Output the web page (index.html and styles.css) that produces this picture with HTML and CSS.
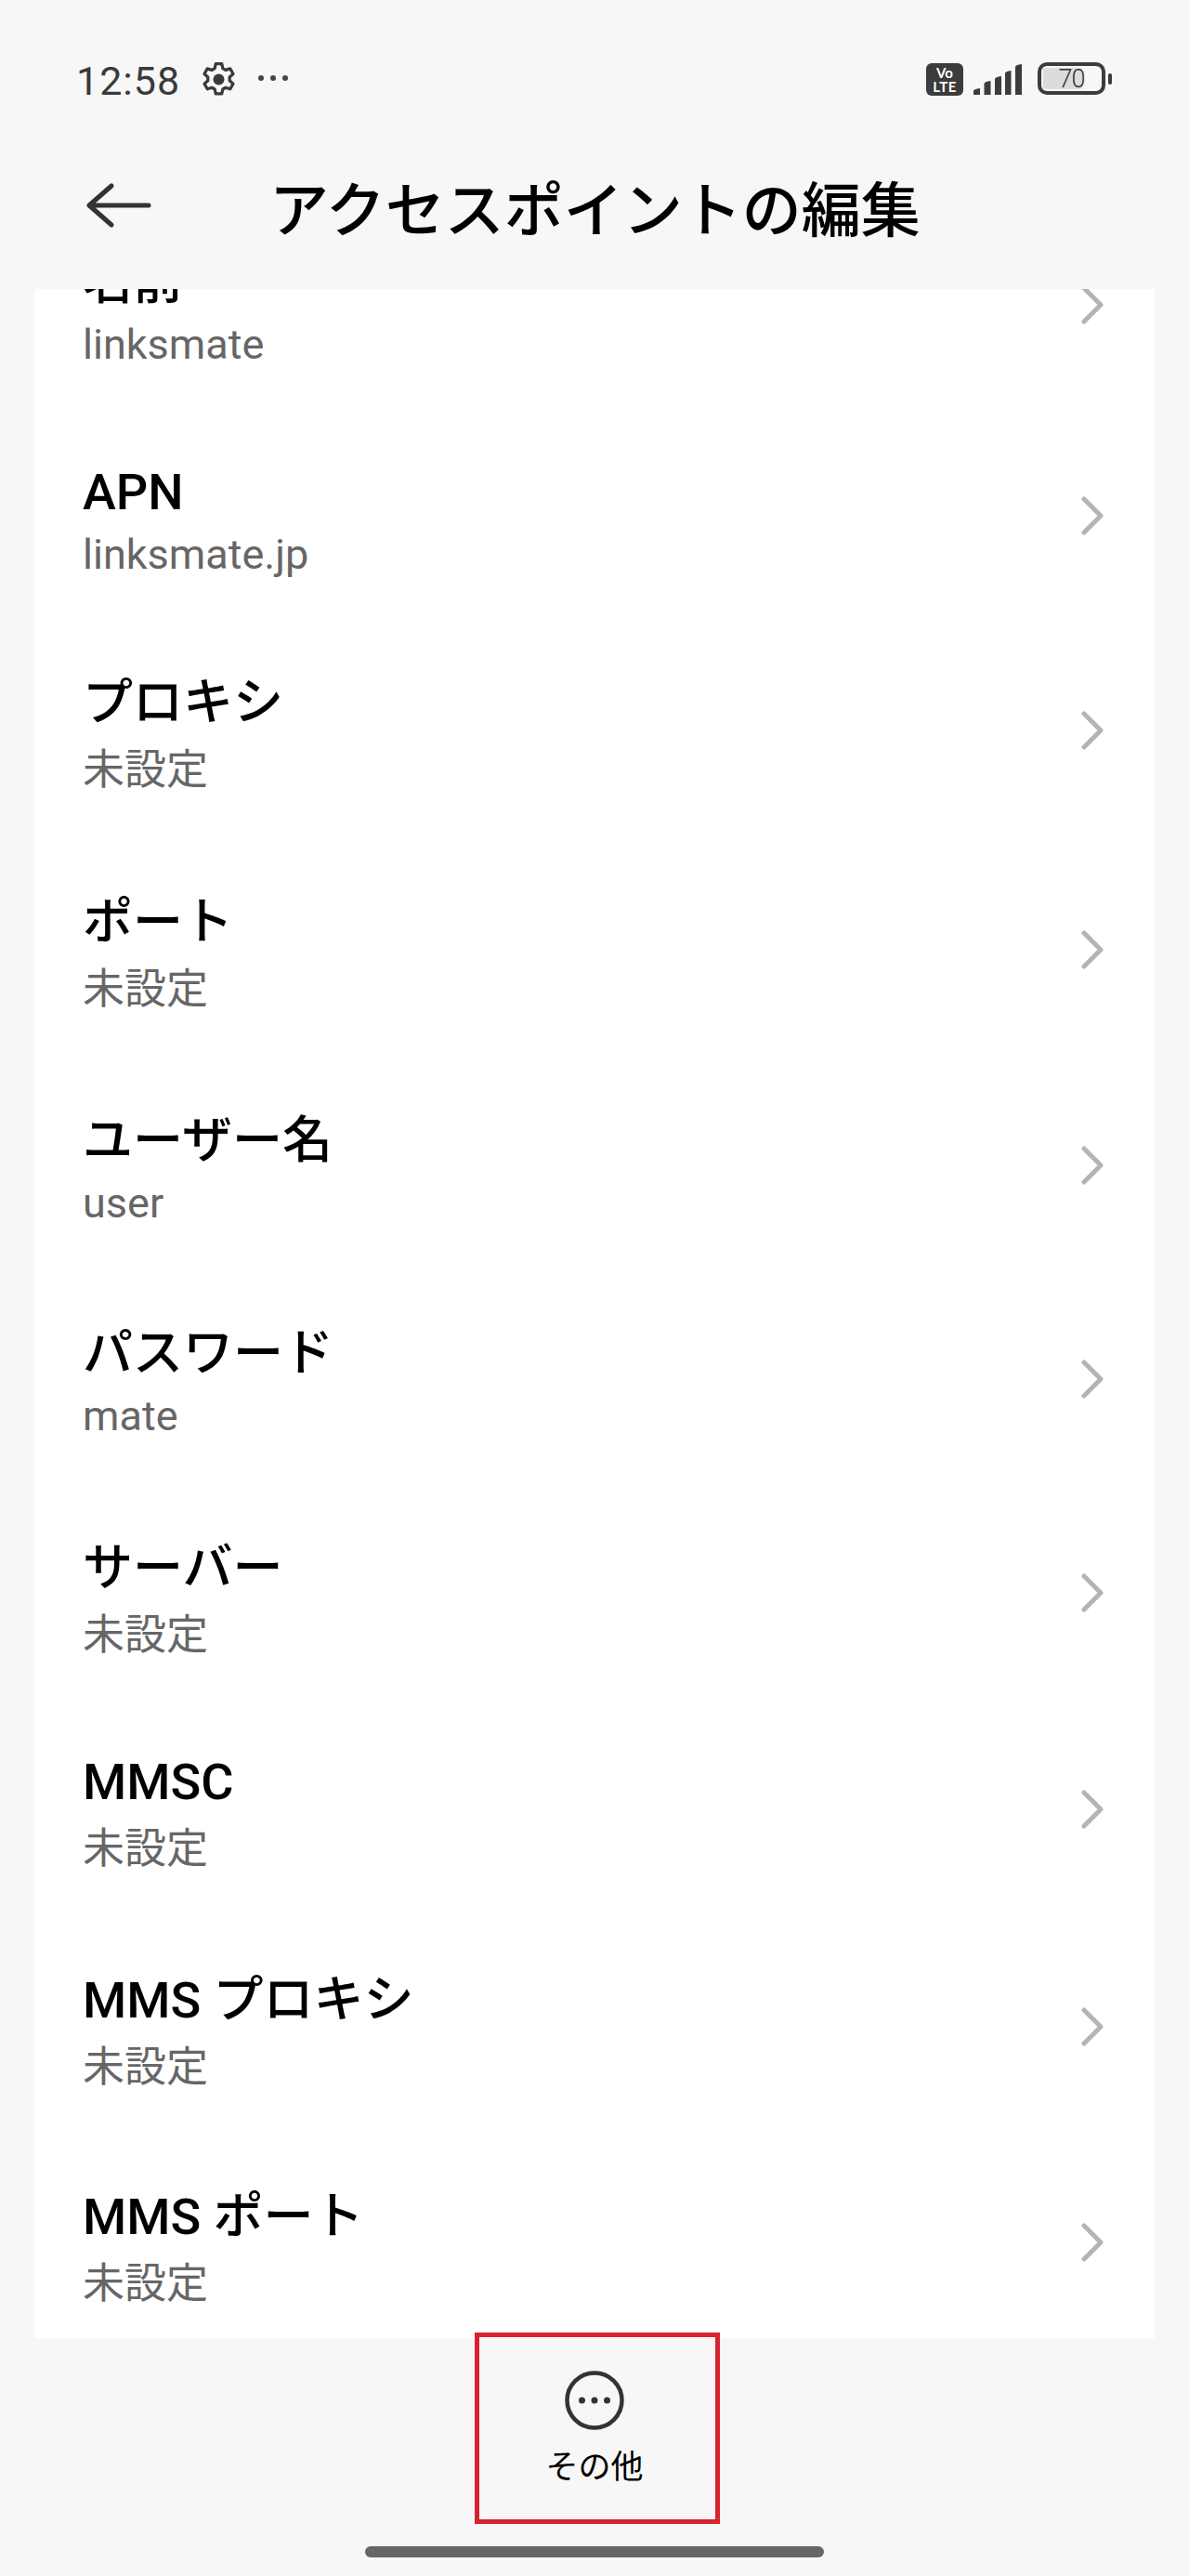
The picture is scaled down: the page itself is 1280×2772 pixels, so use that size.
FILE: index.html
```html
<!DOCTYPE html>
<html lang="ja">
<head>
<meta charset="utf-8">
<title>アクセスポイントの編集</title>
<link rel="stylesheet" href="styles.css">
</head>
<body>
<div class="page">

  <div class="status">
    <span class="time">12:58</span>
    <svg class="gear" width="37" height="39" viewBox="0 0 34 36">
      <path d="M14 2.500h6l1 4.600 2.800 1.600 4.500-1.400 3 5.200-3.500 3.200v3.400l3.500 3.200-3 5.200-4.500-1.400-2.800 1.600-1 4.600h-6l-1-4.600-2.800-1.600-4.500 1.400-3-5.200 3.500-3.200v-3.400l-3.500-3.200 3-5.200 4.500 1.400 2.800-1.600z" fill="none" stroke="#3a3a3a" stroke-width="3" stroke-linejoin="round"/>
      <circle cx="17" cy="18" r="5.500" fill="#3a3a3a"/>
    </svg>
    <svg class="more" width="34" height="8" viewBox="0 0 34 8">
      <circle cx="4" cy="4" r="3" fill="#444"/>
      <circle cx="17" cy="4" r="3" fill="#444"/>
      <circle cx="30" cy="4" r="3" fill="#444"/>
    </svg>
    <div class="status-right">
      <div class="volte"><span>Vo</span><span class="lte">LTE</span></div>
      <svg class="signal" width="52" height="34" viewBox="0 0 52 34">
        <path d="M0 33v-4q0-2 7-3v7z M11.500 33v-12q0-2 7-3v15z M23 33v-17q0-2 7-3v20z M34 33v-23q0-2 6.500-3v26z M45 33v-30q0-2 7-3v33z" fill="#3c3c3c"/>
      </svg>
      <div class="battery">
        <div class="battery-fill"></div>
        <span class="battery-num">70</span>
      </div>
      <div class="battery-nub"></div>
    </div>
  </div>

  <div class="header">
    <svg class="back" width="72" height="52" viewBox="0 0 72 52">
      <path d="M69 26H5M29 5L5 26l24 21" fill="none" stroke="#333" stroke-width="5" stroke-linecap="round" stroke-linejoin="round"/>
    </svg>
    <h1>アクセスポイントの編集</h1>
  </div>

  <div class="card">
    <div class="list">
      <div class="row">
        <div class="text"><div class="name">名前</div><div class="value">linksmate</div></div>
        <svg class="chev" width="24" height="42" viewBox="0 0 24 42"><path d="M3 3l18 18L3 39"/></svg>
      </div>
      <div class="row">
        <div class="text"><div class="name">APN</div><div class="value">linksmate.jp</div></div>
        <svg class="chev" width="24" height="42" viewBox="0 0 24 42"><path d="M3 3l18 18L3 39"/></svg>
      </div>
      <div class="row">
        <div class="text"><div class="name">プロキシ</div><div class="value jp">未設定</div></div>
        <svg class="chev" width="24" height="42" viewBox="0 0 24 42"><path d="M3 3l18 18L3 39"/></svg>
      </div>
      <div class="row">
        <div class="text"><div class="name">ポート</div><div class="value jp">未設定</div></div>
        <svg class="chev" width="24" height="42" viewBox="0 0 24 42"><path d="M3 3l18 18L3 39"/></svg>
      </div>
      <div class="row">
        <div class="text"><div class="name">ユーザー名</div><div class="value">user</div></div>
        <svg class="chev" width="24" height="42" viewBox="0 0 24 42"><path d="M3 3l18 18L3 39"/></svg>
      </div>
      <div class="row">
        <div class="text"><div class="name">パスワード</div><div class="value">mate</div></div>
        <svg class="chev" width="24" height="42" viewBox="0 0 24 42"><path d="M3 3l18 18L3 39"/></svg>
      </div>
      <div class="row">
        <div class="text"><div class="name">サーバー</div><div class="value jp">未設定</div></div>
        <svg class="chev" width="24" height="42" viewBox="0 0 24 42"><path d="M3 3l18 18L3 39"/></svg>
      </div>
      <div class="row">
        <div class="text"><div class="name">MMSC</div><div class="value jp">未設定</div></div>
        <svg class="chev" width="24" height="42" viewBox="0 0 24 42"><path d="M3 3l18 18L3 39"/></svg>
      </div>
      <div class="row">
        <div class="text"><div class="name">MMS プロキシ</div><div class="value jp">未設定</div></div>
        <svg class="chev" width="24" height="42" viewBox="0 0 24 42"><path d="M3 3l18 18L3 39"/></svg>
      </div>
      <div class="row">
        <div class="text"><div class="name">MMS ポート</div><div class="value jp">未設定</div></div>
        <svg class="chev" width="24" height="42" viewBox="0 0 24 42"><path d="M3 3l18 18L3 39"/></svg>
      </div>
    </div>
  </div>

  <div class="footer">
    <div class="more-btn">
      <svg width="66" height="66" viewBox="0 0 66 66">
        <circle cx="33" cy="33" r="29.500" fill="none" stroke="#333" stroke-width="4.500"/>
        <circle cx="19.500" cy="33" r="3.500" fill="#333"/>
        <circle cx="33" cy="33" r="3.500" fill="#333"/>
        <circle cx="46.500" cy="33" r="3.500" fill="#333"/>
      </svg>
      <span class="more-label">その他</span>
    </div>
    <div class="home-bar"></div>
  </div>

  <div class="highlight"></div>
</div>
</body>
</html>
```

FILE: styles.css
```css
* {
  box-sizing: border-box;
}

html, body {
  margin: 0;
  padding: 0;
}

body {
  background: #f7f7f7;
  font-family: Roboto, "Noto Sans CJK JP", sans-serif;
  color: #000;
}

.page {
  position: relative;
  width: 1280px;
  height: 2772px;
  display: flex;
  flex-direction: column;
  overflow: hidden;
}

/* status bar */
.status {
  height: 170px;
  flex: none;
  display: flex;
  align-items: flex-start;
  padding: 60px 83px 0 82px;
}

.time {
  font-size: 43px;
  line-height: 50px;
  letter-spacing: 1px;
  margin-top: 2px;
  color: #3a3a3a;
}

.gear {
  margin: 6px 0 0 23px;
}

.more {
  margin: 20px 0 0 23px;
}

.status-right {
  margin-left: auto;
  display: flex;
  align-items: flex-start;
  padding-top: 7px;
}

.volte {
  width: 40px;
  height: 35px;
  margin-top: 1px;
  background: #3c3c3c;
  border-radius: 6px;
  color: #fff;
  font-family: Lato, sans-serif;
  font-weight: 700;
  font-size: 15px;
  line-height: 15px;
  display: flex;
  flex-direction: column;
  align-items: center;
  justify-content: center;
}

.lte {
  letter-spacing: 0.5px;
}

.signal {
  margin: 2px 0 0 11px;
}

.battery {
  position: relative;
  width: 73px;
  height: 35px;
  margin-left: 17px;
  border: 4px solid #3c3c3c;
  border-radius: 10px;
  display: flex;
  align-items: center;
  justify-content: center;
}

.battery-fill {
  position: absolute;
  left: 2px;
  top: 2px;
  bottom: 2px;
  width: 42px;
  background: #dcdcdc;
  border-radius: 3px;
}

.battery-num {
  position: relative;
  font-size: 27px;
  font-weight: 300;
  letter-spacing: -1px;
  color: #333;
}

.battery-nub {
  width: 4px;
  height: 12px;
  margin: 12px 0 0 3px;
  background: #3c3c3c;
  border-radius: 2px;
}

/* title */
.header {
  height: 141px;
  flex: none;
  display: flex;
  align-items: flex-start;
  padding-left: 91px;
}

.back {
  margin-top: 25px;
}

.header h1 {
  margin: 7px 0 0 127px;
  font-family: "Noto Sans CJK JP", sans-serif;
  font-size: 64px;
  font-weight: 500;
  line-height: 88px;
}

/* list */
.card {
  height: 2205px;
  flex: none;
  margin: 0 37px;
  background: #fff;
  overflow: hidden;
}

.list {
  margin-top: -96px;
}

.row {
  display: flex;
  align-items: center;
  justify-content: space-between;
  padding: 0 55px 0 52px;
}

.row:nth-child(1) { height: 226px; }
.row:nth-child(2) { height: 227px; }
.row:nth-child(3) { height: 236px; }
.row:nth-child(4) { height: 235px; }
.row:nth-child(5) { height: 229px; }
.row:nth-child(6) { height: 231px; }
.row:nth-child(7) { height: 230px; }
.row:nth-child(8) { height: 235px; }
.row:nth-child(9) { height: 233px; }
.row:nth-child(10) { height: 232px; }

.text {
  align-self: flex-start;
  padding-top: 54px;
}

.name {
  font-size: 54px;
  line-height: 70px;
  font-weight: 500;
}

.value {
  font-size: 45px;
  line-height: 58px;
  margin-top: 3px;
  color: #666;
}

.value.jp {
  margin-top: 8px;
}

.chev {
  fill: none;
  stroke: #b4b4b4;
  stroke-width: 5;
  stroke-linecap: round;
  stroke-linejoin: round;
}

/* bottom */
.footer {
  flex: 1;
  display: flex;
  flex-direction: column;
  align-items: center;
}

.more-btn {
  height: 224px;
  padding-top: 34px;
  display: flex;
  flex-direction: column;
  align-items: center;
}

.more-label {
  font-family: "Noto Sans CJK JP", sans-serif;
  font-size: 35px;
  line-height: 46px;
  margin-top: 13px;
}

.home-bar {
  width: 494px;
  height: 12px;
  background: #666;
  border-radius: 6px;
}

.highlight {
  position: absolute;
  left: 511px;
  top: 2510px;
  width: 264px;
  height: 206px;
  border: 5px solid #d8222f;
}
```
